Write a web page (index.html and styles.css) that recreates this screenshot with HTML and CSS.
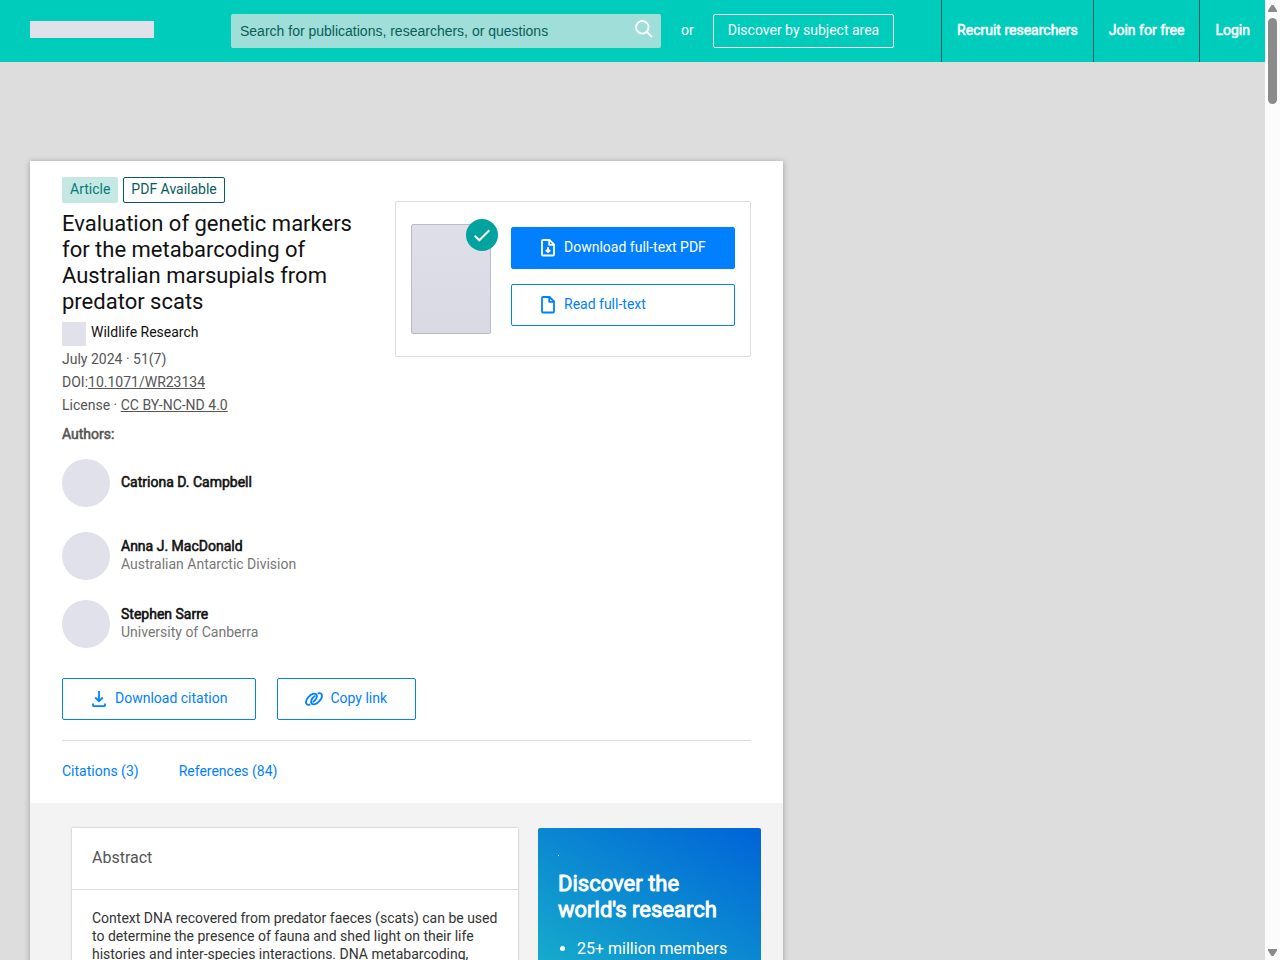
FILE: index.html
```html
<!DOCTYPE html>
<html lang="en">
<head>
    <meta charset="UTF-8">
    <meta name="viewport" content="width=device-width, initial-scale=1.0">
    <title>Evaluation of genetic markers for the metabarcoding of Australian marsupials from predator scats</title>
    <link rel="stylesheet" href="styles.css">
</head>
<body>

    <div class="page">
        <!-- Top bar -->
        <header class="topbar">
            <a href="#" class="logo" aria-label="Home"></a>
            <form class="search">
                <input type="text" aria-label="Search" placeholder="Search for publications, researchers, or questions">
                <button type="button" class="search-btn" aria-label="Search">
                    <svg width="18" height="18" viewBox="0 0 18 18" fill="none" stroke="#fff" stroke-width="1.8"><circle cx="7.3" cy="7.3" r="6.3"/><path d="M11.8 11.8L17 17"/></svg>
                </button>
            </form>
            <span class="or">or</span>
            <a href="#" class="discover">Discover by subject area</a>
            <nav class="topnav">
                <a href="#">Recruit researchers</a>
                <a href="#">Join for free</a>
                <a href="#">Login</a>
            </nav>
        </header>

        <main class="publication">
            <section class="details">
                <div class="details-top">
                    <div class="info">
                        <div class="badges">
                            <span class="badge badge-filled">Article</span>
                            <span class="badge">PDF Available</span>
                        </div>
                        <h1>Evaluation of genetic markers for the metabarcoding of Australian marsupials from predator scats</h1>
                        <div class="journal">
                            <span class="journal-cover"></span>
                            <span>Wildlife Research</span>
                        </div>
                        <ul class="meta">
                            <li>July 2024 · 51(7)</li>
                            <li>DOI:<a href="#">10.1071/WR23134</a></li>
                            <li>License · <a href="#">CC BY-NC-ND 4.0</a></li>
                        </ul>
                        <h2 class="authors-title">Authors:</h2>
                        <ul class="authors">
                            <li class="author">
                                <span class="avatar"></span>
                                <div><a href="#">Catriona D. Campbell</a></div>
                            </li>
                            <li class="author">
                                <span class="avatar"></span>
                                <div><a href="#">Anna J. MacDonald</a><p>Australian Antarctic Division</p></div>
                            </li>
                            <li class="author">
                                <span class="avatar"></span>
                                <div><a href="#">Stephen Sarre</a><p>University of Canberra</p></div>
                            </li>
                        </ul>
                    </div>

                    <!-- Full-text box -->
                    <aside class="fulltext">
                        <div class="thumb">
                            <span class="check">
                                <svg width="16" height="13" viewBox="0 0 16 13" fill="none" stroke="#fff" stroke-width="2"><path d="M.7 6.7L5.3 11.3L15.3 1.2"/></svg>
                            </span>
                        </div>
                        <div class="fulltext-btns">
                            <button type="button" class="btn btn-primary">
                                <svg width="24" height="24" viewBox="0 0 24 24" fill="none" stroke="currentColor" stroke-width="1.8" stroke-linejoin="round"><path d="M7 4h6.5L18 8.5V18.500a1 1 0 0 1-1 1H7a1 1 0 0 1-1-1V5a1 1 0 0 1 1-1z"/><path d="M13.2 4.3v4.5H18"/><path d="M12 11v5M9.800 14L12 16.200l2.200-2.200"/></svg>
                                Download full-text PDF
                            </button>
                            <button type="button" class="btn">
                                <svg width="24" height="24" viewBox="0 0 24 24" fill="none" stroke="currentColor" stroke-width="1.8" stroke-linejoin="round"><path d="M7 4h6.5L18 8.5V18.500a1 1 0 0 1-1 1H7a1 1 0 0 1-1-1V5a1 1 0 0 1 1-1z"/><path d="M13.2 4.3v4.5H18"/></svg>
                                Read full-text
                            </button>
                        </div>
                    </aside>
                </div>

                <div class="actions">
                    <button type="button" class="btn">
                        <svg width="24" height="24" viewBox="0 0 24 24" fill="none" stroke="currentColor" stroke-width="1.8"><path d="M12 4v10.200M8.200 10.500L12 14.300l3.800-3.800"/><path d="M6 16.500v1.700a1 1 0 0 0 1 1H17a1 1 0 0 0 1-1v-1.700"/></svg>
                        Download citation
                    </button>
                    <button type="button" class="btn">
                        <svg width="24" height="24" viewBox="0 0 24 24" fill="none" stroke="currentColor" stroke-width="1.8" stroke-linecap="round"><path d="M7.600 17.700c-2.600.6-4-1-3.600-3.200.4-2.600 3.700-6.700 7-7.700 2.700-.7 4.300.8 3.900 3.100-.4 2-1.900 3.900-3.700 5"/><path d="M16.400 6.300c2.600-.6 4 1 3.600 3.200-.4 2.600-3.700 6.700-7 7.700-2.700.7-4.300-.8-3.900-3.100.4-2 1.900-3.900 3.700-5"/></svg>
                        Copy link
                    </button>
                </div>

                <nav class="tabs">
                    <a href="#">Citations (3)</a>
                    <a href="#">References (84)</a>
                </nav>
            </section>

            <div class="content">
                <article class="abstract">
                    <h2>Abstract</h2>
                    <p>Context DNA recovered from predator faeces (scats) can be used to determine the presence of fauna and shed light on their life histories and inter-species interactions. DNA metabarcoding,</p>
                </article>
                <aside class="promo">
                    <span class="promo-dot"></span>
                    <h2>Discover the world's research</h2>
                    <ul>
                        <li>25+ million members</li>
                    </ul>
                </aside>
            </div>
        </main>
    </div>

    <!-- Scrollbar -->
    <div class="scrollbar" aria-hidden="true">
        <svg width="9" height="7" viewBox="0 0 9 7"><path d="M3.500 0h2L9 5.500V7H0V5.500z" fill="#8b8b8b"/></svg>
        <div class="scroll-thumb"></div>
        <svg class="scroll-down" width="9" height="7" viewBox="0 0 9 7"><path d="M3.500 7h2L9 1.500V0H0v1.500z" fill="#8b8b8b"/></svg>
    </div>

</body>
</html>
```
FILE: styles.css
```css
* {
    margin: 0;
    padding: 0;
    box-sizing: border-box;
}

body {
    display: flex;
    height: 100vh;
    overflow: hidden;
    font-family: Roboto, "Liberation Sans", sans-serif;
    font-size: 14px;
    line-height: 18px;
    color: #111;
    background-color: #ddd;
}

ul {
    list-style: none;
}

a {
    color: inherit;
    text-decoration: none;
}

.page {
    flex: 1;
    min-width: 0;
    overflow: hidden;
}

/* Top bar */
.topbar {
    display: flex;
    align-items: center;
    height: 62px;
    padding-left: 30px;
    color: #fff;
    white-space: nowrap;
    background-color: #00ccbb;
}

.logo {
    width: 124px;
    height: 17px;
    margin: 0 77px 4px 0;
    background-color: #e1e1eb;
}

.search {
    display: flex;
    flex: 0 1 430px;
    height: 34px;
    border-radius: 2px;
    background-color: #a0dfd9;
}

.search input {
    flex: 1;
    min-width: 0;
    padding-left: 9px;
    border: 0;
    outline: 0;
    font-family: "Liberation Sans", Arial, sans-serif;
    font-size: 14px;
    background: transparent;
}

.search input::placeholder {
    color: #085d5a;
    opacity: 1;
}

.search-btn {
    width: 34px;
    padding-bottom: 4px;
    border: 0;
    background: transparent;
}

.search-btn svg {
    display: block;
    margin: 0 auto;
}

.or {
    margin: 0 19px 0 20px;
    padding-bottom: 2px;
}

.discover {
    height: 34px;
    padding: 6px 14px;
    border: 1px solid #fff;
    border-radius: 2px;
}

.topnav {
    display: flex;
    margin-left: auto;
}

.topnav a {
    height: 62px;
    padding: 0 15px;
    line-height: 60px;
    border-left: 1px solid #085d5a;
}

.topnav a,
.authors-title,
.author a,
.promo h2 {
    font-weight: 400;
    -webkit-text-stroke: 0.04em currentColor;
}

/* Publication card */
.publication {
    max-width: 753px;
    margin: 99px 30px 0;
    background-color: #f3f3f3;
    box-shadow: 0 1px 6px rgba(0, 0, 0, 0.3);
}

.details {
    padding: 16px 32px 0;
    background-color: #fff;
}

.details-top {
    display: flex;
    align-items: flex-start;
    gap: 20px;
}

.info {
    flex: 1;
}

.badges {
    display: flex;
    gap: 5px;
    margin-bottom: 8px;
}

.badge {
    height: 26px;
    padding: 2px 7px;
    border: 1px solid #085d5a;
    border-radius: 2px;
    color: #085d5a;
}

.badge-filled {
    border-color: #c5e8e4;
    color: #057b78;
    background-color: #c5e8e4;
}

h1 {
    font-size: 22px;
    font-weight: 400;
    line-height: 26px;
    margin-bottom: 7px;
}

.journal {
    display: flex;
    gap: 5px;
    line-height: 20px;
}

.journal-cover {
    width: 24px;
    height: 24px;
    background-color: #e1e1eb;
}

.meta {
    margin-top: 2px;
    line-height: 23px;
    color: #555;
}

.meta a {
    text-decoration: underline;
}

.authors-title {
    margin-top: 8px;
    font-size: 14px;
    color: #555;
}

.author {
    display: flex;
    align-items: center;
    gap: 11px;
    margin-top: 20px;
}

.author:first-child {
    margin: 16px 0 25px;
}

.author div {
    padding-bottom: 2px;
}

.avatar {
    width: 48px;
    height: 48px;
    border-radius: 50%;
    background-color: #e1e1eb;
}

.author p {
    color: #777;
}

/* Full-text box */
.fulltext {
    display: flex;
    flex: 0 0 356px;
    gap: 20px;
    margin-top: 24px;
    padding: 22px 15px;
    border: 1px solid #ddd;
    border-radius: 2px;
}

.thumb {
    position: relative;
    width: 80px;
    height: 110px;
    border: 1px solid #bbbbc3;
    border-radius: 2px;
    background: linear-gradient(#dfdfe9, #d9d9e3);
}

.check {
    position: absolute;
    top: -6px;
    right: -8px;
    display: flex;
    align-items: center;
    justify-content: center;
    width: 32px;
    height: 32px;
    border-radius: 50%;
    background-color: #00a39e;
}

.fulltext-btns {
    display: flex;
    flex: 1;
    flex-direction: column;
    gap: 15px;
    padding-top: 3px;
}

.btn {
    display: flex;
    align-items: center;
    gap: 4px;
    height: 42px;
    padding: 0 28px 2px 24px;
    border: 1px solid #0080ff;
    border-radius: 2px;
    font-family: inherit;
    font-size: 14px;
    color: #0080ff;
    background-color: #fff;
}

.btn svg {
    position: relative;
    top: 1px;
}

.btn-primary {
    color: #fff;
    background-color: #0080ff;
}

.actions {
    display: flex;
    gap: 21px;
    margin-top: 30px;
    padding-bottom: 20px;
    border-bottom: 1px solid #ddd;
}

.tabs {
    display: flex;
    gap: 40px;
    height: 62px;
    padding-top: 21px;
    color: #0080ff;
}

/* Abstract and promo */
.content {
    display: grid;
    grid-template-columns: minmax(0, 1fr) 223px;
    gap: 20px;
    padding: 25px 22px 25px 42px;
}

.abstract {
    background-color: #fff;
    box-shadow: 0 0 2px rgba(0, 0, 0, 0.3);
}

.abstract h2 {
    padding: 20px 20px 22px;
    border-bottom: 1px solid #ddd;
    font-size: 16px;
    font-weight: 400;
    line-height: 19px;
    color: #555;
}

.abstract p {
    padding: 19px 20px;
    color: #333;
}

.promo {
    min-height: 210px;
    padding: 27px 20px 20px;
    border-radius: 2px;
    color: #fff;
    background: linear-gradient(210deg, #0063d8, #1cc0c8);
}

.promo-dot {
    display: block;
    width: 1px;
    height: 1px;
    margin-bottom: 15px;
    background-color: #fff;
}

.promo h2 {
    font-size: 22px;
    line-height: 26px;
}

.promo ul {
    margin-top: 16px;
    padding-left: 19px;
    list-style: disc;
    font-size: 16px;
    line-height: 20px;
}

/* Scrollbar */
.scrollbar {
    display: flex;
    flex: 0 0 15px;
    flex-direction: column;
    align-items: center;
    gap: 6px;
    padding: 5px 0 4px;
    background-color: #fcfcfc;
}

.scroll-thumb {
    width: 9px;
    height: 86px;
    border-radius: 5px;
    background-color: #8b8b8b;
}

.scroll-down {
    margin-top: auto;
}
```
